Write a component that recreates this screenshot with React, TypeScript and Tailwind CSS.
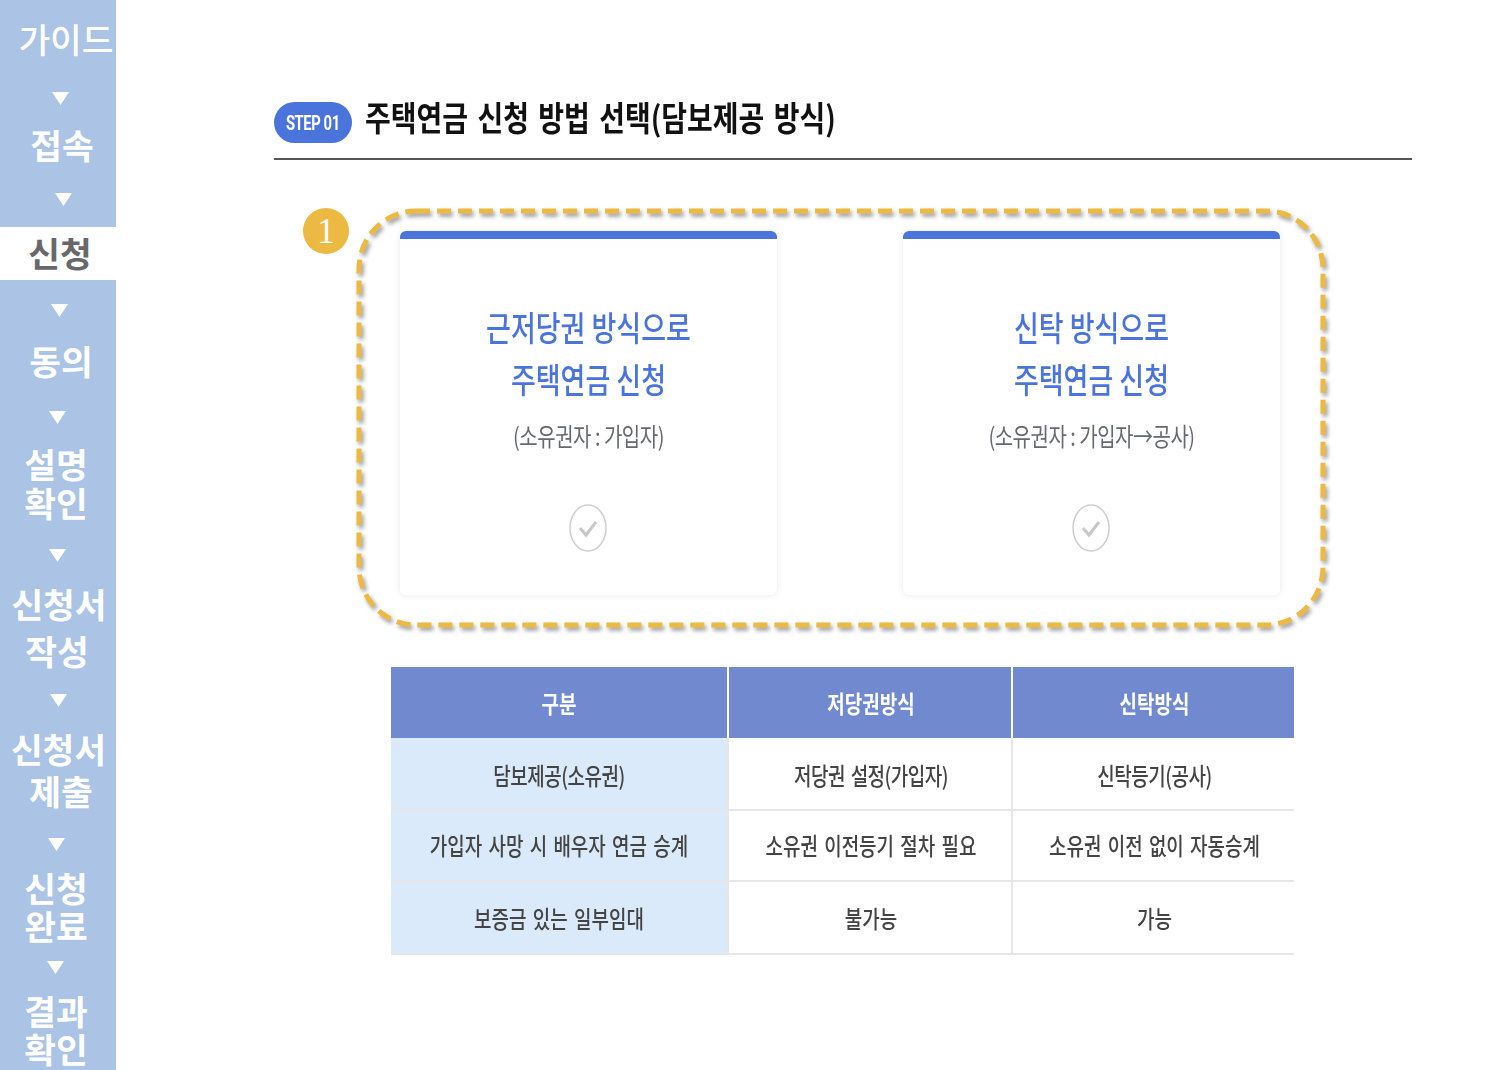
import React from "react";

function Arrow({ className }: { className: string }) {
  return (
    <svg width="17" height="13" viewBox="0 0 17 13" className={className}>
      <polygon points="0,0 17,0 8.5,13" fill="#fff" />
    </svg>
  );
}

function Sidebar() {
  return (
    <aside className="w-[116px] h-[1070px] shrink-0 overflow-hidden bg-[#abc3e4] text-white text-[34.5px] text-center font-semibold">
      <div className="mt-[18px] pl-[16px] leading-[40px] font-medium">가이드</div>
      <Arrow className="mt-[34px] ml-[52px]" />
      <div className="mt-[19px] pl-[8px] leading-[40px]">접속</div>
      <Arrow className="mt-[29px] ml-[55px]" />
      <div className="mt-[21px] h-[53px] pl-[4px] leading-[50px] bg-white text-[#68686c] font-bold">신청</div>
      <Arrow className="mt-[24px] ml-[51px]" />
      <div className="mt-[23px] pl-[6px] leading-[40px]">동의</div>
      <Arrow className="mt-[31px] ml-[49px]" />
      <div className="mt-[20px] pr-[4px] leading-[39px]">
        <div>설명</div>
        <div>확인</div>
      </div>
      <Arrow className="mt-[27px] ml-[49px]" />
      <div className="mt-[18px] leading-[47px]">
        <div className="pl-[2px]">신청서</div>
        <div className="pr-[2px]">작성</div>
      </div>
      <Arrow className="mt-[20px] ml-[50px]" />
      <div className="mt-[20px] leading-[42px]">
        <div className="pl-[1px]">신청서</div>
        <div className="pl-[6px]">제출</div>
      </div>
      <Arrow className="mt-[27px] ml-[48px]" />
      <div className="mt-[17px] pr-[4px] leading-[38px]">
        <div>신청</div>
        <div>완료</div>
      </div>
      <Arrow className="mt-[17px] ml-[47px]" />
      <div className="mt-[17px] pr-[4px] leading-[38px]">
        <div>결과</div>
        <div>확인</div>
      </div>
    </aside>
  );
}

function CheckMark() {
  return (
    <svg width="38" height="48" viewBox="0 0 38 48">
      <ellipse cx="19" cy="24" rx="18" ry="23" fill="#fff" stroke="#cfcfcf" strokeWidth="1.5" />
      <path d="M11 24l6 7 10-13" fill="none" stroke="#c8c8c8" strokeWidth="3" />
    </svg>
  );
}

function OptionCard({ title, sub }: { title: string; sub: string }) {
  return (
    <div className="w-[377px] h-[364px] flex flex-col items-center bg-white rounded-[6px] overflow-hidden shadow-[0_0_7px_rgba(0,0,0,0.09)]">
      <div className="w-full h-[8px] bg-[#4a74dc]" />
      <div className="mt-[62px] text-[27px] text-[#4a74dc] text-center font-medium">
        <div className="leading-[52px] scale-y-[1.25]">{title}</div>
        <div className="leading-[52px] scale-y-[1.25]">주택연금 신청</div>
      </div>
      <div className="mt-[17px] text-[20px] leading-[28px] tracking-[-0.5px] text-[#666a70] scale-y-[1.25]">{sub}</div>
      <div className="mt-[54px] mr-[1px]">
        <CheckMark />
      </div>
    </div>
  );
}

const rows = [
  { head: "담보제공(소유권)", a: "저당권 설정(가입자)", b: "신탁등기(공사)", h: "h-[72px]", pad: "pt-[4px] tracking-[-0.5px]" },
  { head: "가입자 사망 시 배우자 연금 승계", a: "소유권 이전등기 절차 필요", b: "소유권 이전 없이 자동승계", h: "h-[71px]", pad: "" },
  { head: "보증금 있는 일부임대", a: "불가능", b: "가능", h: "h-[73px]", pad: "pt-[2px]" },
];

function CompareTable() {
  return (
    <table className="mt-[40px] ml-[117px] w-[903px] table-fixed border-collapse text-[19px] text-center text-[#444] [word-spacing:2px]">
      <colgroup>
        <col className="w-[337px]" />
        <col className="w-[284px]" />
        <col className="w-[282px]" />
      </colgroup>
      <thead>
        <tr className="h-[71px] bg-[#7189cf] text-white">
          <th className="pt-[2px] font-bold"><span className="inline-block scale-y-[1.25]">구분</span></th>
          <th className="pt-[2px] pl-[2px] font-bold border-l-2 border-white"><span className="inline-block scale-y-[1.25]">저당권방식</span></th>
          <th className="pt-[2px] pl-[2px] font-bold border-l-2 border-white"><span className="inline-block scale-y-[1.25]">신탁방식</span></th>
        </tr>
      </thead>
      <tbody className="font-medium">
        {rows.map((r) => (
          <tr key={r.head} className={`${r.h} border-b-2 border-[#e6e6e6]`}>
            <td className={`${r.pad} bg-[#daeafb]`}><span className="inline-block scale-y-[1.25]">{r.head}</span></td>
            <td className={`${r.pad} pl-[2px] border-l-2 border-[#e6e6e6]`}><span className="inline-block scale-y-[1.25]">{r.a}</span></td>
            <td className={`${r.pad} pl-[2px] border-l-2 border-[#e6e6e6]`}><span className="inline-block scale-y-[1.25]">{r.b}</span></td>
          </tr>
        ))}
      </tbody>
    </table>
  );
}

export default function App() {
  return (
    <div className="flex min-h-[1070px] bg-white font-['Noto_Sans_CJK_KR','Noto_Sans',sans-serif]">
      <Sidebar />
      <main className="pl-[158px] pt-[102px] w-[1296px]">
        <div className="flex items-center gap-[13px] h-[41px]">
          <span className="w-[78px] h-[41px] flex items-center justify-center rounded-full bg-[#4a74dc] text-white text-[18px] font-['Roboto',sans-serif] font-bold tracking-[-0.5px]">
            <span className="inline-block scale-x-[0.82] scale-y-[1.1] whitespace-nowrap">STEP 01</span>
          </span>
          <h1 className="text-[28px] font-semibold text-[#111] -mt-[12px] scale-y-[1.2] origin-left whitespace-nowrap [word-spacing:3px]">
            주택연금 신청 방법 선택(담보제공 방식)
          </h1>
        </div>
        <div className="mt-[15px] h-[2px] w-[1138px] bg-[#555]" />

        <div className="relative mt-[48px] ml-[82px] w-[970px] h-[420px] pt-[23px] pl-[44px] flex gap-[126px]">
          <OptionCard title="근저당권 방식으로" sub="(소유권자 : 가입자)" />
          <OptionCard title="신탁 방식으로" sub="(소유권자 : 가입자→공사)" />
          <svg width="970" height="420" className="absolute left-0 top-0 overflow-visible drop-shadow-[2px_3px_2px_rgba(0,0,0,0.4)]">
            <rect x="3" y="3" width="964" height="414" rx="57" ry="58" fill="none" stroke="#ecb942" strokeWidth="5" strokeDasharray="14 7" />
          </svg>
          <span className="absolute -left-[53px] top-0 w-[46px] h-[46px] flex items-center justify-center rounded-full bg-[#ecb942] text-white text-[36px] font-['Liberation_Serif',serif]">
            1
          </span>
        </div>

        <div className="-mt-[1px]">
          <CompareTable />
        </div>
      </main>
    </div>
  );
}
